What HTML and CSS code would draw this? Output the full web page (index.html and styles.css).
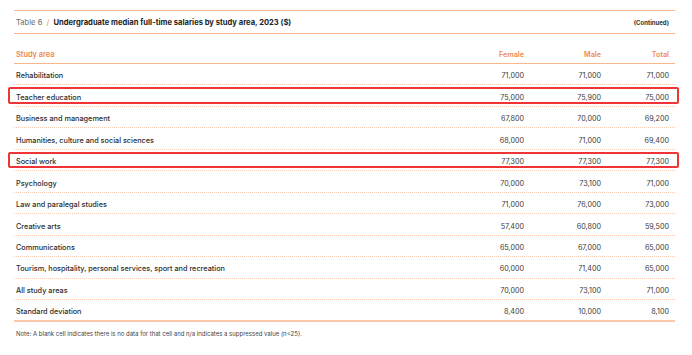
FILE: index.html
```html
<!DOCTYPE html>
<html lang="en">
<head>
<meta charset="utf-8">
<title>Table 6</title>
<link rel="stylesheet" href="styles.css">
</head>
<body>
<div class="page">
  <div class="title-bar">
    <div class="title"><span class="label">Table 6</span> <span class="slash">/</span> <strong>Undergraduate median full-time salaries by study area, 2023 ($)</strong></div>
    <div class="continued">(Continued)</div>
  </div>
  <div class="row head">
    <div class="c name">Study area</div>
    <div class="c num">Female</div>
    <div class="c num">Male</div>
    <div class="c num">Total</div>
  </div>
  <div class="row"><div class="c name">Rehabilitation</div><div class="c num">71,000</div><div class="c num">71,000</div><div class="c num">71,000</div></div>
  <div class="row mark"><div class="c name">Teacher education</div><div class="c num">75,000</div><div class="c num">75,900</div><div class="c num">75,000</div></div>
  <div class="row"><div class="c name">Business and management</div><div class="c num">67,800</div><div class="c num">70,000</div><div class="c num">69,200</div></div>
  <div class="row"><div class="c name">Humanities, culture and social sciences</div><div class="c num">68,000</div><div class="c num">71,000</div><div class="c num">69,400</div></div>
  <div class="row mark"><div class="c name">Social work</div><div class="c num">77,300</div><div class="c num">77,300</div><div class="c num">77,300</div></div>
  <div class="row"><div class="c name">Psychology</div><div class="c num">70,000</div><div class="c num">73,100</div><div class="c num">71,000</div></div>
  <div class="row"><div class="c name">Law and paralegal studies</div><div class="c num">71,000</div><div class="c num">76,000</div><div class="c num">73,000</div></div>
  <div class="row"><div class="c name">Creative arts</div><div class="c num">57,400</div><div class="c num">60,800</div><div class="c num">59,500</div></div>
  <div class="row"><div class="c name">Communications</div><div class="c num">65,000</div><div class="c num">67,000</div><div class="c num">65,000</div></div>
  <div class="row"><div class="c name">Tourism, hospitality, personal services, sport and recreation</div><div class="c num">60,000</div><div class="c num">71,400</div><div class="c num">65,000</div></div>
  <div class="row"><div class="c name">All study areas</div><div class="c num">70,000</div><div class="c num">73,100</div><div class="c num">71,000</div></div>
  <div class="row last"><div class="c name">Standard deviation</div><div class="c num">8,400</div><div class="c num">10,000</div><div class="c num">8,100</div></div>
  <p class="note">Note: A blank cell indicates there is no data for that cell and n/a indicates a suppressed value (n&lt;25).</p>
</div>
</body>
</html>
```
FILE: styles.css
```css
html, body {
  margin: 0;
  padding: 0;
  background: #ffffff;
}
body {
  font-family: Inter, "Liberation Sans", Arial, sans-serif;
  color: #333333;
}
.page {
  width: 661px;
  margin-left: 14px;
  padding-top: 10px;
}
.title-bar {
  display: flex;
  justify-content: space-between;
  align-items: center;
  height: 24px;
  border-top: 1px solid #f9b58c;
  border-bottom: 1px solid #f9b58c;
  box-sizing: border-box;
  padding: 1px 6px 0 2px;
  font-size: 7.6px;
}
.title .label {
  color: #6b6b6b;
}
.title .slash {
  color: #f08a4b;
  margin: 0 2px;
}
.title strong {
  color: #222222;
  font-weight: 700;
}
.continued {
  font-size: 6px;
  font-weight: 700;
  color: #333333;
}
.row {
  display: grid;
  grid-template-columns: 226px 290px 77px 68px;
  height: 21.47px;
  box-sizing: border-box;
  border-bottom: 1px dotted #f9cdb3;
  align-items: center;
  font-size: 7.3px;
  position: relative;
}
.row.head {
  height: 30px;
  align-items: end;
  padding-bottom: 4px;
  border-bottom: 1px solid #f9b58c;
  color: #f08a4b;
  font-weight: 600;
  font-size: 7.4px;
}
.row.last {
  border-bottom: 2px solid #f9c9ab;
}
.c {
  padding-top: 3px;
  white-space: nowrap;
}
.head .c {
  padding-top: 0;
}
.name {
  padding-left: 2px;
  font-weight: 500;
  color: #2e2e2e;
}
.head .name {
  font-weight: 600;
  color: #f08a4b;
}
.num {
  text-align: right;
  padding-right: 6px;
  color: #3a3a3a;
  font-size: 7.2px;
}
.head .num {
  color: #f08a4b;
}
.mark::after {
  content: "";
  position: absolute;
  top: 2px;
  bottom: 2px;
  left: -6px;
  right: -4px;
  border: 2px solid #ee3434;
  border-radius: 2px;
}
.note {
  margin: 8px 0 0 2px;
  font-size: 6px;
  color: #444444;
}
```
